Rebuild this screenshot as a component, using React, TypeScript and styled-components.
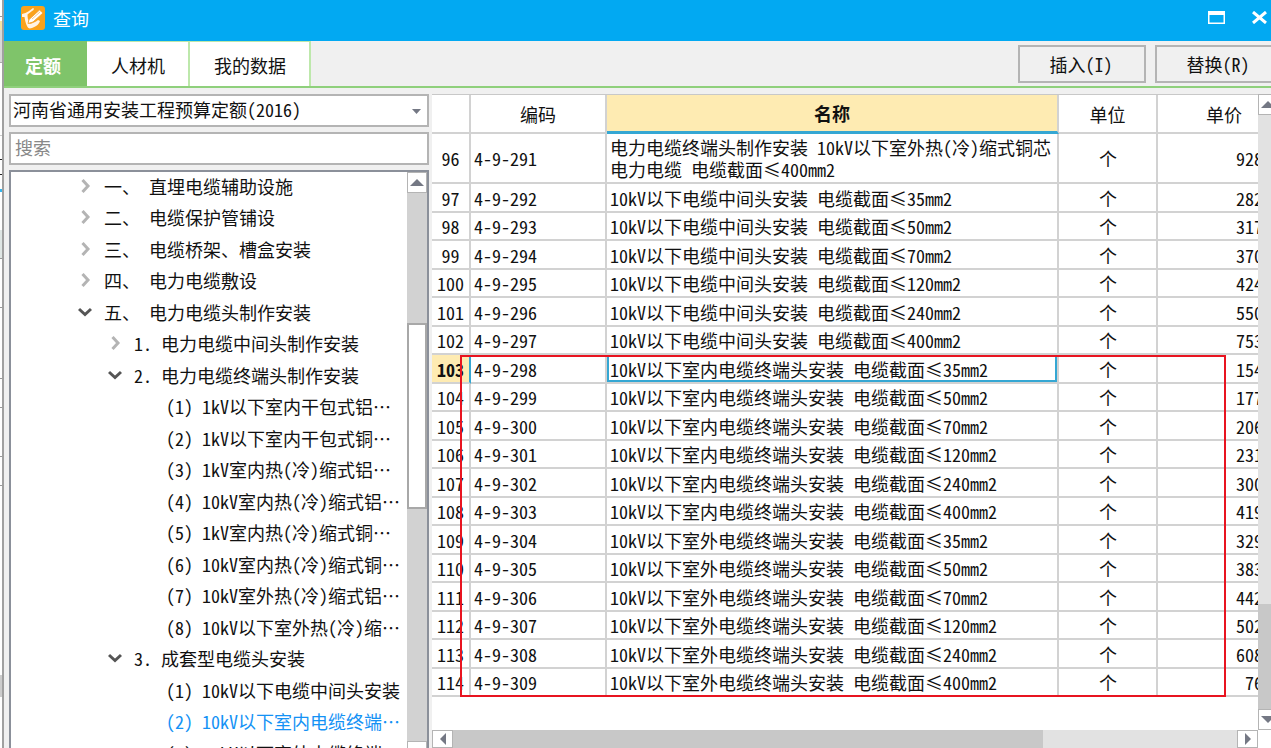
import React from "react";
import styled, { createGlobalStyle, css } from "styled-components";

const GlobalStyle = createGlobalStyle`
  * { box-sizing: border-box; }
  html, body { margin: 0; height: 100%; overflow: hidden; }
  body, button, input, select {
    font-family: "Noto Sans Mono CJK SC", "Noto Sans CJK SC", "Liberation Mono", monospace;
    font-size: 18px;
    color: #111;
  }
`;

const Desktop = styled.div`
  display: flex;
  height: 100vh;
  overflow: hidden;
  background: #f0f0f0;
`;

const BackEdge = styled.div`
  flex: 0 0 4px;
  display: flex;
  flex-direction: column;
  background: #fff;
  border-right: 2px solid #a0a0a0;
`;

const EdgeBand = styled.span<{ $h: number; $color: string; $line?: string }>`
  flex: 0 0 ${(p) => p.$h}px;
  background: ${(p) => p.$color};
  border-bottom: 1px solid ${(p) => p.$line ?? p.$color};
`;

const Dialog = styled.section`
  flex: 0 0 calc(100% + 8px);
  height: calc(100vh + 16px);
  display: flex;
  flex-direction: column;
`;

const TitleBar = styled.header`
  flex: 0 0 41px;
  display: flex;
  align-items: center;
  padding: 0 15px 6px 17px;
  background: #02a9f2;
`;

const Title = styled.h1`
  flex: 1;
  margin: 0 0 0 8px;
  font-size: 18px;
  font-weight: 400;
  line-height: 24px;
  color: #fff;
`;

const WindowButton = styled.button`
  display: flex;
  padding: 0;
  margin-left: 26px;
  border: 0;
  background: none;
`;

const Toolbar = styled.div`
  flex: 0 0 47px;
  display: flex;
  border-bottom: 2px solid #8fd07c;
`;

const Tab = styled.button<{ $active?: boolean }>`
  padding: 2px 23px 0 24px;
  border: 0;
  border-right: 2px solid #bde8ab;
  border-top: 1px solid #bde8ab;
  background: #fff;
  ${(p) =>
    p.$active &&
    css`
      padding: 2px 24px 0 21px;
      border-color: #7fc46a;
      background: #7fc46a;
      color: #fff;
      font-weight: 700;
    `}
`;

const Actions = styled.div`
  margin-left: auto;
  display: flex;
  gap: 9px;
  padding: 4px 0 3px;
`;

const ActionButton = styled.button`
  width: 128px;
  padding: 0 2px 0 0;
  border: 2px solid #b4b4b4;
  background: #f0f0f0;
`;

const Content = styled.main`
  flex: 1;
  min-height: 0;
  display: flex;
  gap: 3px;
  padding: 6px 5px 0;
`;

const Sidebar = styled.aside`
  flex: 0 0 420px;
  display: flex;
  flex-direction: column;
  gap: 5px;
`;

const SelectBox = styled.div`
  position: relative;
  display: flex;
  flex: 0 0 33px;
`;

const Select = styled.select`
  flex: 1;
  appearance: none;
  padding: 0 0 3px 2px;
  border: 2px solid #b4b4b4;
  border-radius: 0;
  background: #fff;
`;

const SelectArrow = styled.svg`
  position: absolute;
  right: 8px;
  top: 15px;
  pointer-events: none;
`;

const Search = styled.input`
  flex: 0 0 33px;
  padding: 0 4px 3px;
  border: 2px solid #b4b4b4;
  &::placeholder { color: #888; opacity: 1; }
`;

const TreePanel = styled.div`
  flex: 1;
  min-height: 0;
  display: flex;
  border: 2px solid #8b909a;
  background: #fff;
`;

const Tree = styled.ul`
  flex: 1;
  min-width: 0;
  margin: 0;
  padding: 0;
  overflow: hidden;
  list-style: none;
`;

const TreeItem = styled.li<{ $level: number; $selected?: boolean }>`
  display: flex;
  align-items: center;
  gap: 12px;
  height: 31px;
  padding-bottom: 4px;
  padding-left: ${(p) => [67, 97, 155][p.$level]}px;
  white-space: pre;
  color: ${(p) => (p.$selected ? "#1492f5" : "#111")};
  &:nth-child(even) { height: 32px; }
`;

const ScrollTrack = styled.div<{ $horizontal?: boolean; $color: string }>`
  flex: 0 0 ${(p) => (p.$horizontal ? 18 : 20)}px;
  display: flex;
  flex-direction: ${(p) => (p.$horizontal ? "row" : "column")};
  margin-right: ${(p) => (p.$horizontal ? 20 : 0)}px;
  background: ${(p) => p.$color};
`;

const ScrollButton = styled.button`
  flex: 0 0 21px;
  display: flex;
  align-items: center;
  justify-content: center;
  padding: 0;
  border: 1px solid #b4b4b4;
  background: #fff;
`;

const ScrollSpace = styled.div<{ $grow: number }>`
  flex: ${(p) => p.$grow} 0 0;
`;

const ScrollThumb = styled.div<{ $grow: number; $light?: boolean }>`
  flex: ${(p) => p.$grow} 0 0;
  background: ${(p) => (p.$light ? "#fff" : "#c8c8c8")};
  border: ${(p) => (p.$light ? "2px solid #a8a8a8" : "0")};
`;

const GridPane = styled.div`
  flex: 1;
  min-width: 0;
  display: flex;
  flex-direction: column;
  padding-bottom: 16px;
  background: #fff;
`;

const GridArea = styled.div`
  flex: 1;
  min-height: 0;
  display: flex;
`;

const GridView = styled.div`
  position: relative;
  flex: 1;
  min-width: 0;
  overflow: hidden;
  background: #fff;
  border-top: 1px solid #c8c8c8;
`;

const Table = styled.table`
  width: calc(100% + 34px);
  table-layout: fixed;
  border-collapse: separate;
  border-spacing: 0;
`;

const Col = styled.col<{ $w?: number }>`
  width: ${(p) => (p.$w ? `${p.$w}px` : "auto")};
`;

const cell = css`
  padding: 0;
  border-right: 2px solid #d2d2d2;
  border-bottom: 2px solid #d2d2d2;
  line-height: 22px;
`;

const HeadCell = styled.th<{ $active?: boolean }>`
  ${cell}
  height: 39px;
  font-weight: 400;
  ${(p) =>
    p.$active &&
    css`
      font-weight: 700;
      background: #feebb2;
      border-bottom: 3px solid #35a7d3;
    `}
`;

const Row = styled.tr<{ $tall?: boolean }>`
  height: ${(p) => (p.$tall ? 50 : 28)}px;
  &:nth-child(even) { height: 29px; }
`;

const NumberCell = styled.th<{ $active?: boolean }>`
  ${cell}
  font-weight: 400;
  ${(p) =>
    p.$active &&
    css`
      font-weight: 700;
      background: #feebb2;
      border-right-color: #35a7d3;
    `}
`;

const Cell = styled.td<{ $align?: string; $active?: boolean }>`
  ${cell}
  padding: 0 2px 0 3px;
  text-align: ${(p) => p.$align ?? "left"};
  ${(p) => p.$active && css`box-shadow: inset 0 0 0 2px #35a7d3;`}
`;

const PriceCell = styled(Cell)`
  padding-right: 27px;
  text-align: right;
`;

const Highlight = styled.div`
  position: absolute;
  left: 28px;
  right: 32px;
  top: 260px;
  height: 342px;
  border: 2px solid #e81420;
  pointer-events: none;
`;

type Node = { level: number; text: string; open?: boolean; selected?: boolean };

const nodes: Node[] = [
  { level: 0, text: "一、 直埋电缆辅助设施" },
  { level: 0, text: "二、 电缆保护管铺设" },
  { level: 0, text: "三、 电缆桥架、槽盒安装" },
  { level: 0, text: "四、 电力电缆敷设" },
  { level: 0, text: "五、 电力电缆头制作安装", open: true },
  { level: 1, text: "1. 电力电缆中间头制作安装" },
  { level: 1, text: "2. 电力电缆终端头制作安装", open: true },
  { level: 2, text: "(1) 1kV以下室内干包式铝…" },
  { level: 2, text: "(2) 1kV以下室内干包式铜…" },
  { level: 2, text: "(3) 1kV室内热(冷)缩式铝…" },
  { level: 2, text: "(4) 10kV室内热(冷)缩式铝…" },
  { level: 2, text: "(5) 1kV室内热(冷)缩式铜…" },
  { level: 2, text: "(6) 10kV室内热(冷)缩式铜…" },
  { level: 2, text: "(7) 10kV室外热(冷)缩式铝…" },
  { level: 2, text: "(8) 10kV以下室外热(冷)缩…" },
  { level: 1, text: "3. 成套型电缆头安装", open: true },
  { level: 2, text: "(1) 10kV以下电缆中间头安装" },
  { level: 2, text: "(2) 10kV以下室内电缆终端…", selected: true },
  { level: 2, text: "(3) 10kV以下室外电缆终端…" },
];

const sizes = [35, 50, 70, 120, 240, 400];
const kinds = ["电缆中间头安装", "室内电缆终端头安装", "室外电缆终端头安装"];
const prices = [
  "282", "317", "370", "424", "550", "753",
  "154", "177", "206", "231", "300", "419",
  "329", "383", "442", "502", "608", "76",
];

const rows = [
  {
    no: 96,
    code: "4-9-291",
    name: "电力电缆终端头制作安装 10kV以下室外热(冷)缩式铜芯电力电缆 电缆截面≤400mm2",
    price: "928",
  },
  ...prices.map((price, i) => ({
    no: 97 + i,
    code: `4-9-${292 + i}`,
    name: `10kV以下${kinds[Math.floor(i / 6)]} 电缆截面≤${sizes[i % 6]}mm2`,
    price,
  })),
];

const Chevron = ({ open }: { open?: boolean }) => (
  <svg width="14" height="14" viewBox="0 0 14 14" fill="none" strokeWidth="3" aria-hidden="true">
    {open ? (
      <path d="M1 4l6 5.5L13 4" stroke="#555" />
    ) : (
      <path d="M4.500 1l5.500 6-5.500 6" stroke="#b4b4b4" />
    )}
  </svg>
);

const arrows = {
  up: "M0 8L7 1l7 7z",
  down: "M0 1h14L7 8z",
  left: "M10 0v12L4 6z",
  right: "M4 0v12l6-6z",
};

const Arrow = ({ dir }: { dir: keyof typeof arrows }) => {
  const h = dir === "up" || dir === "down" ? 9 : 12;
  return (
    <svg width="14" height={h} viewBox={`0 0 14 ${h}`} aria-hidden="true">
      <path d={arrows[dir]} fill="#747884" />
    </svg>
  );
};

const Logo = () => (
  <svg width="24" height="24" viewBox="0 0 24 24" aria-hidden="true">
    <rect width="24" height="24" rx="3" fill="#faa21b" />
    <path
      d="M1 8C6 7 9 4 12 2c1 0 1 1 .5 2C10 6 8 7 6.500 8.500c0 3 .5 6 2 9.500 3-.5 6-2 8.500-4l2 1c-1 3-3 5-8 7-3 1-4 0-5-2-1.500-3-2-6-2.500-9L1 11z"
      fill="#fff3e4"
    />
    <path d="M8 13.500L18.500 4l3.500 3-10 9-5 1.500z" fill="#fff" stroke="#f6a637" strokeWidth="1" />
    <path d="M11 13l8-7" stroke="#f9c98a" strokeWidth="1" />
  </svg>
);

export default function App() {
  return (
    <>
      <GlobalStyle />
      <Desktop>
        <BackEdge aria-hidden="true">
          <EdgeBand $h={17} $color="#fff" $line="#999" />
          <EdgeBand $h={4} $color="#fff" />
          <EdgeBand $h={9} $color="#f5e3a4" />
          <EdgeBand $h={33} $color="#d8d8d8" $line="#aaa" />
          <EdgeBand $h={73} $color="#fff" $line="#ccc" />
          <EdgeBand $h={24} $color="#fff" $line="#222" />
          <EdgeBand $h={15} $color="#fff" $line="#222" />
          <EdgeBand $h={14} $color="#fff" />
          <EdgeBand $h={3} $color="#35b5ee" />
          <EdgeBand $h={38} $color="#fff" />
          <EdgeBand $h={29} $color="#dfe6e4" $line="#999" />
          <EdgeBand $h={49} $color="#fff" $line="#999" />
          <EdgeBand $h={71} $color="#fff" $line="#999" />
          <EdgeBand $h={29} $color="#fff" $line="#999" />
          <EdgeBand $h={49} $color="#fff" $line="#999" />
          <EdgeBand $h={29} $color="#fff" $line="#999" />
          <EdgeBand $h={189} $color="#fff" />
          <EdgeBand $h={22} $color="#ccc" />
        </BackEdge>
        <Dialog>
          <TitleBar>
            <Logo />
            <Title>查询</Title>
            <WindowButton aria-label="最大化">
              <svg width="17" height="13" viewBox="0 0 17 13">
                <path d="M0 0h17v13H0zM1.500 4v7.500h14V4z" fill="#fff" fillRule="evenodd" />
              </svg>
            </WindowButton>
            <WindowButton aria-label="关闭">
              <svg width="17" height="13" viewBox="0 0 17 13" stroke="#fff" strokeWidth="3">
                <path d="M2 1l13 11M15 1L2 12" />
              </svg>
            </WindowButton>
          </TitleBar>
          <Toolbar>
            <Tab $active>定额</Tab>
            <Tab>人材机</Tab>
            <Tab>我的数据</Tab>
            <Actions>
              <ActionButton>插入(I)</ActionButton>
              <ActionButton>替换(R)</ActionButton>
            </Actions>
          </Toolbar>
          <Content>
            <Sidebar>
              <SelectBox>
                <Select aria-label="定额库">
                  <option>河南省通用安装工程预算定额(2016)</option>
                </Select>
                <SelectArrow width="9" height="5" viewBox="0 0 9 5">
                  <path d="M0 0h9L4.500 5z" fill="#747884" />
                </SelectArrow>
              </SelectBox>
              <Search type="text" placeholder="搜索" aria-label="搜索" />
              <TreePanel>
                <Tree role="tree">
                  {nodes.map((n) => (
                    <TreeItem
                      key={n.level + n.text}
                      role="treeitem"
                      aria-selected={!!n.selected}
                      $level={n.level}
                      $selected={n.selected}
                    >
                      {n.level < 2 && <Chevron open={n.open} />}
                      {n.text}
                    </TreeItem>
                  ))}
                </Tree>
                <ScrollTrack $color="#d2d2d2">
                  <ScrollButton aria-label="向上滚动"><Arrow dir="up" /></ScrollButton>
                  <ScrollSpace $grow={132} />
                  <ScrollThumb $grow={184} $light />
                  <ScrollSpace $grow={235} />
                  <ScrollButton aria-label="向下滚动"><Arrow dir="down" /></ScrollButton>
                </ScrollTrack>
              </TreePanel>
            </Sidebar>
            <GridPane>
              <GridArea>
                <GridView>
                  <Table>
                    <colgroup>
                      <Col $w={39} />
                      <Col $w={136} />
                      <Col />
                      <Col $w={99} />
                      <Col $w={134} />
                    </colgroup>
                    <thead>
                      <tr>
                        <HeadCell aria-label="序号" />
                        <HeadCell>编码</HeadCell>
                        <HeadCell $active>名称</HeadCell>
                        <HeadCell>单位</HeadCell>
                        <HeadCell>单价</HeadCell>
                      </tr>
                    </thead>
                    <tbody>
                      {rows.map((r) => (
                        <Row key={r.no} $tall={r.no === 96}>
                          <NumberCell scope="row" $active={r.no === 103}>{r.no}</NumberCell>
                          <Cell>{r.code}</Cell>
                          <Cell $active={r.no === 103}>{r.name}</Cell>
                          <Cell $align="center">个</Cell>
                          <PriceCell>{r.price}</PriceCell>
                        </Row>
                      ))}
                    </tbody>
                  </Table>
                  <Highlight />
                </GridView>
                <ScrollTrack $color="#e2e2e2">
                  <ScrollButton aria-label="向上滚动"><Arrow dir="up" /></ScrollButton>
                  <ScrollSpace $grow={488} />
                  <ScrollThumb $grow={105} />
                  <ScrollButton aria-label="向下滚动"><Arrow dir="down" /></ScrollButton>
                </ScrollTrack>
              </GridArea>
              <ScrollTrack $horizontal $color="#e2e2e2">
                <ScrollButton aria-label="向左滚动"><Arrow dir="left" /></ScrollButton>
                <ScrollThumb $grow={590} />
                <ScrollSpace $grow={194} />
                <ScrollButton aria-label="向右滚动"><Arrow dir="right" /></ScrollButton>
              </ScrollTrack>
            </GridPane>
          </Content>
        </Dialog>
      </Desktop>
    </>
  );
}
